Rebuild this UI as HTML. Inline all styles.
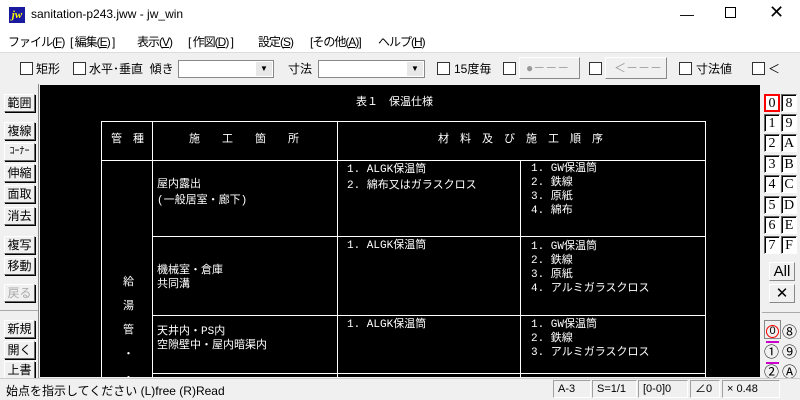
<!DOCTYPE html>
<html><head><meta charset="utf-8"><style>
*{margin:0;padding:0;box-sizing:border-box}
body{width:800px;height:400px;overflow:hidden;background:#f0f0f0;font-family:"Liberation Sans","Noto Sans CJK JP",sans-serif;font-size:12px;color:#000;position:relative}
.a{position:absolute;white-space:nowrap}
.m{position:absolute;top:33px;white-space:nowrap;font-size:12px;letter-spacing:-1px}
.cb{position:absolute;width:13px;height:13px;border:1px solid #333;background:#fff}
.btn{position:absolute;left:4px;width:31px;height:18px;background:#f0f0f0;border:1px solid;border-color:#fff #666 #666 #fff;box-shadow:1px 1px 0 #000;font-size:12px;text-align:center;line-height:16px}
.lb{position:absolute;width:16px;height:18px;background:#fff;border:1px solid;border-color:#666 #fff #fff #666;box-shadow:inset 1px 1px 0 #000;font-family:"Liberation Serif",serif;font-size:14px;text-align:center;line-height:17px}
.w{color:#fff;font-size:11px;font-family:"Liberation Mono","Noto Sans CJK JP",monospace;position:absolute;white-space:nowrap;line-height:16px}
.h{position:absolute;background:#fff;height:1px}
.v{position:absolute;background:#fff;width:1px}
.sb{position:absolute;top:380px;height:18px;border:1px solid;border-color:#a0a0a0 #fff #fff #a0a0a0;font-size:11px;line-height:16px;padding-left:4px}
</style></head><body>
<div class="a" style="left:0;top:0;width:800px;height:52px;background:#fff"></div>
<div class="a" style="left:9px;top:7px;width:16px;height:16px;background:#1a1aa0;color:#ff0;font:italic bold 11px 'Liberation Serif',serif;line-height:16px;text-align:center">jw</div>
<div class="a" style="left:31px;top:7px;font-size:12px">sanitation-p243.jww - jw_win</div>
<div class="a" style="left:680px;top:6px;font-size:14px">—</div>
<div class="a" style="left:725px;top:7px;width:11px;height:11px;border:1px solid #000"></div>
<div class="a" style="left:769px;top:2px;font-size:18px;font-weight:300">✕</div>
<div class="m" style="left:8px">ファイル(<u>F</u>)</div>
<div class="m" style="left:70px">[ 編集(<u>E</u>) ]</div>
<div class="m" style="left:137px">表示(<u>V</u>)</div>
<div class="m" style="left:188px">[ 作図(<u>D</u>) ]</div>
<div class="m" style="left:258px">設定(<u>S</u>)</div>
<div class="m" style="left:310px">[その他(<u>A</u>)]</div>
<div class="m" style="left:378px">ヘルプ(<u>H</u>)</div>
<div class="a" style="left:0;top:52px;width:800px;height:1px;background:#ddd"></div>
<div class="cb" style="left:20px;top:62px"></div><div class="a" style="left:36px;top:60px">矩形</div>
<div class="cb" style="left:73px;top:62px"></div><div class="a" style="left:89px;top:60px">水平･垂直&nbsp;&nbsp;傾き</div>
<div class="a" style="left:178px;top:60px;width:96px;height:18px;background:#fff;border:1px solid #888"></div>
<div class="a" style="left:256px;top:62px;width:16px;height:14px;background:#e8e8e8;font-size:8px;text-align:center;line-height:14px">▼</div>
<div class="a" style="left:288px;top:60px">寸法</div>
<div class="a" style="left:318px;top:60px;width:107px;height:18px;background:#fff;border:1px solid #888"></div>
<div class="a" style="left:407px;top:62px;width:16px;height:14px;background:#e8e8e8;font-size:8px;text-align:center;line-height:14px">▼</div>
<div class="cb" style="left:437px;top:62px"></div><div class="a" style="left:454px;top:60px">15度毎</div>
<div class="cb" style="left:503px;top:62px"></div>
<div class="a" style="left:519px;top:57px;width:61px;height:22px;border:1px solid;border-color:#fff #888 #888 #fff;color:#999;line-height:20px;padding-left:6px">●－－－</div>
<div class="cb" style="left:589px;top:62px"></div>
<div class="a" style="left:605px;top:57px;width:62px;height:22px;border:1px solid;border-color:#fff #888 #888 #fff;color:#999;line-height:20px;padding-left:8px">＜－－－</div>
<div class="cb" style="left:679px;top:62px"></div><div class="a" style="left:696px;top:60px">寸法値</div>
<div class="cb" style="left:752px;top:62px"></div><div class="a" style="left:768px;top:60px">＜</div>

<div class="a" style="left:40px;top:85px;width:720px;height:292px;background:#000"></div>
<div class="a" style="left:38px;top:84px;width:1px;height:294px;background:#888"></div>

<div class="w" style="left:356px;top:95px">表１　保温仕様</div>
<div class="h" style="left:101px;top:121px;width:605px"></div>
<div class="h" style="left:101px;top:160px;width:605px"></div>
<div class="h" style="left:152px;top:236px;width:554px"></div>
<div class="h" style="left:152px;top:315px;width:554px"></div>
<div class="h" style="left:152px;top:373px;width:554px"></div>
<div class="v" style="left:101px;top:121px;height:256px"></div>
<div class="v" style="left:152px;top:121px;height:256px"></div>
<div class="v" style="left:337px;top:121px;height:256px"></div>
<div class="v" style="left:520px;top:160px;height:217px"></div>
<div class="v" style="left:705px;top:121px;height:256px"></div>
<div class="w" style="left:111px;top:132px">管　種</div>
<div class="w" style="left:189px;top:132px">施　　工　　箇　　所</div>
<div class="w" style="left:438px;top:132px">材　料　及　び　施　工　順　序</div>
<div class="w" style="left:123px;top:271px;line-height:24px;width:12px;white-space:normal">給<br>湯<br>管<br>・<br>・</div>
<div class="w" style="left:157px;top:177px">屋内露出<br>(一般居室・廊下)</div>
<div class="w" style="left:347px;top:162px;line-height:16px">1. ALGK保温筒<br>2. 綿布又はガラスクロス</div>
<div class="w" style="left:531px;top:162px;line-height:14px">1. GW保温筒<br>2. 鉄線<br>3. 原紙<br>4. 綿布</div>
<div class="w" style="left:157px;top:264px;line-height:14px">機械室・倉庫<br>共同溝</div>
<div class="w" style="left:347px;top:238px">1. ALGK保温筒</div>
<div class="w" style="left:531px;top:240px;line-height:14px">1. GW保温筒<br>2. 鉄線<br>3. 原紙<br>4. アルミガラスクロス</div>
<div class="w" style="left:157px;top:325px;line-height:14px">天井内・PS内<br>空隙壁中・屋内暗渠内</div>
<div class="w" style="left:347px;top:317px">1. ALGK保温筒</div>
<div class="w" style="left:531px;top:318px;line-height:14px">1. GW保温筒<br>2. 鉄線<br>3. アルミガラスクロス</div>

<div class="btn" style="top:94px">範囲</div>
<div class="btn" style="top:122px">複線</div>
<div class="btn" style="top:143px;font-size:10px">ｺｰﾅｰ</div>
<div class="btn" style="top:164px">伸縮</div>
<div class="btn" style="top:185px">面取</div>
<div class="btn" style="top:207px">消去</div>
<div class="btn" style="top:236px">複写</div>
<div class="btn" style="top:257px">移動</div>
<div class="btn" style="top:284px;color:#aaa">戻る</div>
<div class="a" style="left:0;top:310px;width:38px;height:1px;background:#aaa"></div>
<div class="btn" style="top:320px">新規</div>
<div class="btn" style="top:341px">開く</div>
<div class="btn" style="top:361px">上書</div>

<div class="lb" style="left:764px;top:94px;border-color:#f00;box-shadow:none;border-width:2px;line-height:15px">0</div>
<div class="lb" style="left:781px;top:94px">8</div>
<div class="lb" style="left:764px;top:114px">1</div><div class="lb" style="left:781px;top:114px">9</div>
<div class="lb" style="left:764px;top:134px">2</div><div class="lb" style="left:781px;top:134px">A</div>
<div class="lb" style="left:764px;top:155px">3</div><div class="lb" style="left:781px;top:155px">B</div>
<div class="lb" style="left:764px;top:175px">4</div><div class="lb" style="left:781px;top:175px">C</div>
<div class="lb" style="left:764px;top:196px">5</div><div class="lb" style="left:781px;top:196px">D</div>
<div class="lb" style="left:764px;top:216px">6</div><div class="lb" style="left:781px;top:216px">E</div>
<div class="lb" style="left:764px;top:236px">7</div><div class="lb" style="left:781px;top:236px">F</div>
<div class="a" style="left:769px;top:262px;width:26px;height:19px;border:1px solid;border-color:#fff #888 #888 #fff;font-size:15px;text-align:center;line-height:17px">All</div>
<div class="a" style="left:769px;top:284px;width:26px;height:19px;border:1px solid;border-color:#fff #888 #888 #fff;font-size:15px;text-align:center;line-height:17px">✕</div>
<div class="a" style="left:762px;top:312px;width:38px;height:1px;background:#aaa"></div>
<div class="a" style="left:764px;top:320px;width:17px;height:19px;background:#f0f0f0;border:1px solid #888;font-size:13px;text-align:center;line-height:17px"><span style="display:inline-block;width:13px;height:13px;border:1px solid #f00;border-radius:50%;line-height:11px;font-size:11px">0</span></div>
<div class="a" style="left:782px;top:321px;font-size:15px">⑧</div>
<div class="a" style="left:766px;top:341px;width:13px;height:2px;background:#c0c"></div>
<div class="a" style="left:764px;top:341px;font-size:15px">①</div><div class="a" style="left:782px;top:341px;font-size:15px">⑨</div>
<div class="a" style="left:766px;top:362px;width:13px;height:2px;background:#c0c"></div>
<div class="a" style="left:764px;top:361px;font-size:15px">②</div><div class="a" style="left:782px;top:361px;font-size:15px">Ⓐ</div>

<div class="a" style="left:0;top:378px;width:800px;height:22px;background:#f0f0f0;border-top:1px solid #ccc"></div>
<div class="a" style="left:6px;top:382px;font-size:12px">始点を指示してください (L)free (R)Read</div>
<div class="sb" style="left:553px;width:38px">A-3</div>
<div class="sb" style="left:592px;width:45px">S=1/1</div>
<div class="sb" style="left:638px;width:50px">[0-0]0</div>
<div class="sb" style="left:690px;width:30px">∠0</div>
<div class="sb" style="left:722px;width:58px">×&nbsp;0.48</div>
</body></html>
